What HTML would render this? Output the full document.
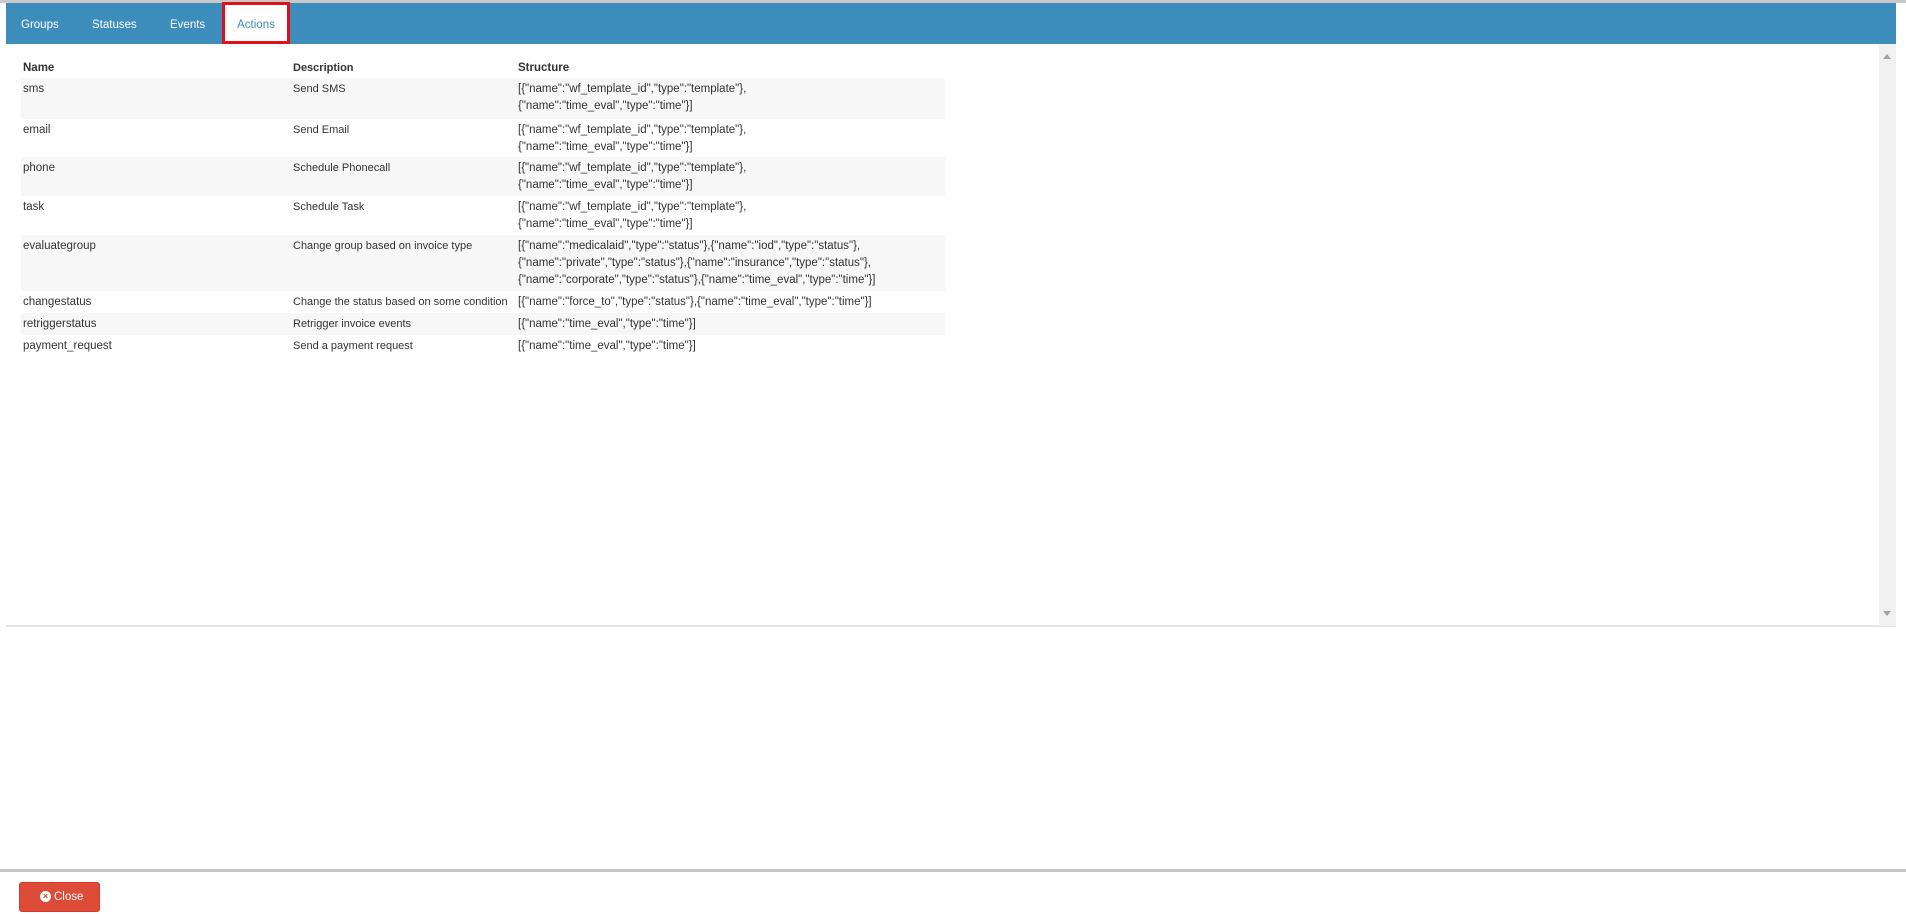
<!DOCTYPE html>
<html><head><meta charset="utf-8"><style>
*{margin:0;padding:0;box-sizing:border-box}
body{width:1906px;height:914px;background:#fff;font-family:"Liberation Sans",sans-serif;font-size:11.5px;color:#333;position:relative;overflow:hidden}
.top{position:absolute;left:0;top:0;width:1906px;height:3px;background:#c8c8c8}
.hdr{position:absolute;left:6px;top:3px;width:1890px;height:41px;background:#3c8dbc}
.tab{position:absolute;top:19px;color:#fff;font-size:11.5px}
.act{position:absolute;left:222px;top:2px;width:68px;height:42px;background:#fff;border:3px solid #e3101a;color:#3c8dbc;font-size:11.5px;text-align:center;padding-top:14px}
.panel{position:absolute;left:6px;top:44px;width:1890px;height:583px;border-bottom:2px solid #e4e4e4}
.sb{position:absolute;left:1879px;top:44px;width:17px;height:582px;background:#f1f1f1}
.sb .u{position:absolute;left:4px;top:10px;border:4px solid transparent;border-bottom:5px solid #a3a3a3;border-top:0}
.sb .d{position:absolute;left:4px;bottom:10px;border:4px solid transparent;border-top:5px solid #a3a3a3;border-bottom:0}
table{position:absolute;left:21px;top:57px;width:924px;border-collapse:collapse;table-layout:fixed}
td,th{vertical-align:top;text-align:left;line-height:17px;padding:3px 2px 1px;font-weight:normal;white-space:nowrap;overflow:visible}
th{font-weight:bold;height:20px}
td:nth-child(1),th:nth-child(1){width:270px}
td:nth-child(2),th:nth-child(2){width:225px;font-size:11px}
tr.s{background:#f7f7f7}
.foot{position:absolute;left:0;top:869px;width:1906px;height:3px;background:#c6c6c6}
.btn{position:absolute;left:19px;top:882px;width:81px;height:30px;background:#dd4b39;border:1px solid #d73925;border-radius:3px;color:#fff;font-size:11.5px;padding:8px 0 0 34px}
.btn i{position:absolute;left:20px;top:8px;width:11px;height:11px;border-radius:50%;background:#fff;color:#dd4b39;font-style:normal;font-size:9px;line-height:11px;text-align:center;font-weight:bold}
</style></head><body>
<div class="top"></div>
<div class="hdr"></div>
<div class="tab" style="left:21px">Groups</div>
<div class="tab" style="left:92px">Statuses</div>
<div class="tab" style="left:170px">Events</div>
<div class="act">Actions</div>
<div class="panel"></div>
<div class="sb"><div class="u"></div><div class="d"></div></div>
<table>
<colgroup><col style="width:270px"><col style="width:225px"><col></colgroup>
<tr><th>Name</th><th>Description</th><th>Structure</th></tr>
<tr class="s" style="height:41px"><td>sms</td><td>Send SMS</td><td>[{"name":"wf_template_id","type":"template"},<br>{"name":"time_eval","type":"time"}]</td></tr>
<tr style="height:38px"><td>email</td><td>Send Email</td><td>[{"name":"wf_template_id","type":"template"},<br>{"name":"time_eval","type":"time"}]</td></tr>
<tr class="s" style="height:39px"><td>phone</td><td>Schedule Phonecall</td><td>[{"name":"wf_template_id","type":"template"},<br>{"name":"time_eval","type":"time"}]</td></tr>
<tr style="height:39px"><td>task</td><td>Schedule Task</td><td>[{"name":"wf_template_id","type":"template"},<br>{"name":"time_eval","type":"time"}]</td></tr>
<tr class="s" style="height:56px"><td>evaluategroup</td><td>Change group based on invoice type</td><td>[{"name":"medicalaid","type":"status"},{"name":"iod","type":"status"},<br>{"name":"private","type":"status"},{"name":"insurance","type":"status"},<br>{"name":"corporate","type":"status"},{"name":"time_eval","type":"time"}]</td></tr>
<tr style="height:22px"><td>changestatus</td><td>Change the status based on some condition</td><td>[{"name":"force_to","type":"status"},{"name":"time_eval","type":"time"}]</td></tr>
<tr class="s" style="height:22px"><td>retriggerstatus</td><td>Retrigger invoice events</td><td>[{"name":"time_eval","type":"time"}]</td></tr>
<tr style="height:22px"><td>payment_request</td><td>Send a payment request</td><td>[{"name":"time_eval","type":"time"}]</td></tr>
</table>
<div class="foot"></div>
<div class="btn"><i>×</i>Close</div>
</body></html>
